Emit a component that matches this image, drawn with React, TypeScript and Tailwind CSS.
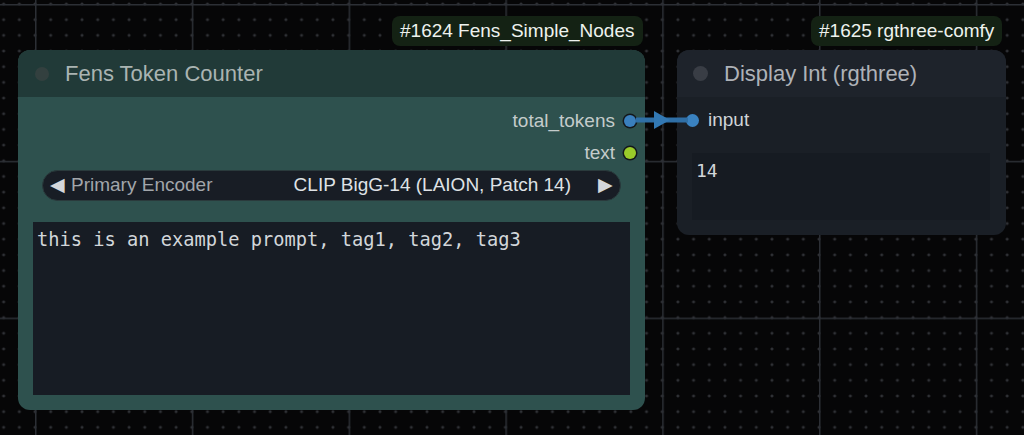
import React from "react";

const sans = { fontFamily: '"Liberation Sans", Arial, sans-serif' };
const mono = { fontFamily: '"DejaVu Sans Mono", monospace' };

function CanvasGrid() {
  return (
    <svg className="absolute inset-0 h-full w-full" aria-hidden>
      <defs>
        <pattern id="dots" width="15.68" height="15.68" x="27.16" y="-3.84" patternUnits="userSpaceOnUse">
          <path d="M7.84 6.3v3.1M6.3 7.84h3.1" stroke="#3c3f44" strokeWidth="1" />
        </pattern>
        <pattern id="major" width="156.8" height="156.8" x="35" y="4" patternUnits="userSpaceOnUse">
          <path d="M0 0V156.8M0 0H156.8" stroke="#2c2f35" strokeWidth="3" />
        </pattern>
      </defs>
      <rect width="100%" height="100%" fill="#060607" />
      <rect width="100%" height="100%" fill="url(#dots)" />
      <rect width="100%" height="100%" fill="url(#major)" />
    </svg>
  );
}

function Badge({ label, className }: { label: string; className: string }) {
  return (
    <div
      className={`absolute flex h-[30px] items-center rounded-lg bg-[#142214] px-[8px] text-[19px] text-[#eef2ee] ${className}`}
      style={sans}
    >
      {label}
    </div>
  );
}

function Slot({ color }: { color: string }) {
  return (
    <span
      className="block h-[12px] w-[12px] rounded-full ring-[1.5px] ring-[#14181c]"
      style={{ backgroundColor: color }}
    />
  );
}

function TokenCounterNode() {
  return (
    <div
      className="absolute left-[18px] top-[50px] flex h-[360px] w-[627px] flex-col overflow-hidden rounded-[12px] bg-[#2e514e]"
      style={sans}
    >
      <div className="flex h-[47px] shrink-0 items-center gap-[16px] bg-[#213a38] pl-[17px]">
        <span className="h-[14px] w-[14px] rounded-full bg-[#33403f]" />
        <span className="text-[22px] text-[#aab4b2]">Fens Token Counter</span>
      </div>
      <div className="flex flex-col items-end pr-[9px] pt-[8px] text-[19px] text-[#c4cccb]">
        <div className="flex h-[32px] items-center gap-[9px]">
          total_tokens
          <Slot color="#3a7fbd" />
        </div>
        <div className="flex h-[32px] items-center gap-[9px]">
          text
          <Slot color="#9acb2a" />
        </div>
      </div>
      <div className="flex flex-1 flex-col px-[15px] pb-[15px]">
        <div className="mx-[9px] mt-[1px] flex h-[31px] items-center rounded-full border border-[#2a3a3c] bg-[#181d25] pl-[7px] pr-[7px] text-[19px]">
          <span className="text-[19px] text-[#d4d7db]">◀</span>
          <span className="ml-[6px] text-[#a2a6ab]">Primary Encoder</span>
          <span className="ml-auto text-[#dfe2e6]">CLIP BigG-14 (LAION, Patch 14)</span>
          <span className="ml-[27px] text-[19px] text-[#d4d7db]">▶</span>
        </div>
        <div className="mt-[21px] flex-1 bg-[#171c24] px-[4px] pt-[4px] text-[18.7px] text-[#d2d6da]" style={mono}>
          this is an example prompt, tag1, tag2, tag3
        </div>
      </div>
    </div>
  );
}

function DisplayIntNode() {
  return (
    <div
      className="absolute left-[677px] top-[50px] flex h-[185px] w-[329px] flex-col overflow-hidden rounded-[12px] bg-[#1a1f26]"
      style={sans}
    >
      <div className="flex h-[47px] shrink-0 items-center gap-[16px] bg-[#1e232b] pl-[16px]">
        <span className="h-[15px] w-[15px] rounded-full bg-[#393d45]" />
        <span className="text-[22px] text-[#aeb2b8]">Display Int (rgthree)</span>
      </div>
      <div className="flex h-[46px] items-center gap-[9px] pl-[9px] text-[19px] text-[#d0d4d8]">
        <span className="block h-[13px] w-[13px] rounded-full bg-[#3a82c0]" />
        input
      </div>
      <div className="flex flex-1 flex-col pl-[15px] pr-[16px] pb-[15px]">
        <div className="mt-[10px] flex-1 bg-[#161b22] px-[4px] pt-[4px] text-[18px] text-[#d2d6da]" style={mono}>
          14
        </div>
      </div>
    </div>
  );
}

function Link() {
  return (
    <svg className="absolute left-[630px] top-[108px] h-[24px] w-[70px]" viewBox="0 0 70 24" aria-hidden>
      <path d="M6 12H58" stroke="#2f6fa6" strokeWidth="5" />
      <path d="M24 3L40 12L24 21Z" fill="#3278b3" />
    </svg>
  );
}

export default function App() {
  return (
    <div className="relative h-[435px] w-[1024px] overflow-hidden bg-[#060607]">
      <CanvasGrid />
      <Badge label="#1624 Fens_Simple_Nodes" className="left-[392px] top-[16px]" />
      <Badge label="#1625 rgthree-comfy" className="left-[811px] top-[16px]" />
      <TokenCounterNode />
      <DisplayIntNode />
      <Link />
    </div>
  );
}
